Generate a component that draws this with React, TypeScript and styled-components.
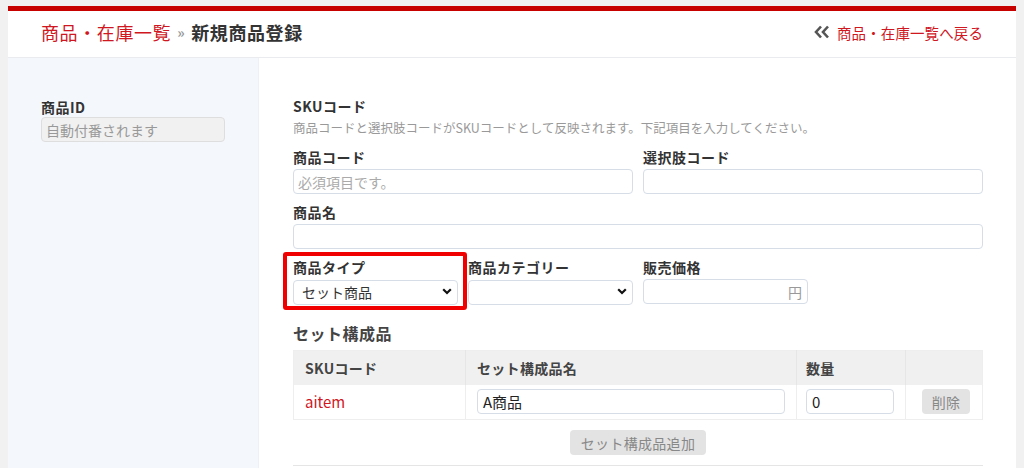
import React from "react";
import styled, { createGlobalStyle } from "styled-components";

const Global = createGlobalStyle`
  html, body { background: #f1f1f1; }
  body {
    margin: 6px 8px 0;
    font-family: "Noto Sans CJK JP", "Noto Sans", sans-serif;
    color: #333;
  }
  * { box-sizing: border-box; }
`;

const Card = styled.div`
  background: #fff;
  border-top: 5px solid #c70000;
`;

const Header = styled.header`
  height: 47px;
  display: flex;
  align-items: center;
  justify-content: space-between;
  padding: 0 33px 4px 33px;
  border-bottom: 1px solid #e9ebee;
`;

const Title = styled.h1`
  margin: 0;
  font-size: 18px;
  font-weight: 700;
  letter-spacing: 0.6px;
  display: flex;
  align-items: center;
  gap: 6px;
`;

const Crumb = styled.a`
  color: #d0161e;
  font-weight: 400;
  text-decoration: none;
`;

const Sep = styled.span`
  color: #999;
  font-size: 14px;
  font-weight: 700;
`;

const Current = styled.span`
  color: #333;
`;

const BackLink = styled.a`
  display: flex;
  align-items: center;
  gap: 7px;
  color: #d0161e;
  font-size: 14.5px;
  letter-spacing: 0.1px;
  text-decoration: none;
`;

const Body = styled.div`
  display: grid;
  grid-template-columns: 251px 1fr;
  min-height: 520px;
`;

const Sidebar = styled.aside`
  background: #f4f8fc;
  border-right: 1px solid #eef1f4;
  padding: 40px 33px;
`;

const Main = styled.main`
  padding: 38px 33px 40px 34px;
  min-width: 0;
`;

const Label = styled.div<{ $tight?: boolean }>`
  font-size: 14px;
  font-weight: 700;
  line-height: ${(p) => (p.$tight ? "19px" : "20px")};
  letter-spacing: 0.5px;
  color: #333;
  margin-bottom: ${(p) => (p.$tight ? "0" : "2px")};
  white-space: nowrap;
`;

const Help = styled.div`
  font-size: 12.5px;
  line-height: 16px;
  color: #999;
  margin: 4px 0 11px;
  white-space: nowrap;
`;

const TextInput = styled.input<{ $disabled?: boolean }>`
  display: block;
  width: 100%;
  height: 25px;
  border: 1px solid ${(p) => (p.$disabled ? "#dedede" : "#d6dde6")};
  border-radius: 4px;
  background: ${(p) => (p.$disabled ? "#f1f1f1" : "#fff")};
  font-family: inherit;
  font-size: 14px;
  color: #333;
  padding: 0 4px;
  outline: none;
  &::placeholder { color: #aaa; }
`;

const IdInput = styled(TextInput)`
  width: 184px;
  &::placeholder { color: #999; }
`;

const Grid = styled.div`
  display: grid;
  grid-template-columns: repeat(4, minmax(0, 1fr));
  column-gap: 10px;
  row-gap: 8px;
`;

const Field = styled.div<{ $span?: number; $highlight?: boolean }>`
  grid-column: span ${(p) => p.$span ?? 1};
  position: relative;
  min-width: 0;
  ${(p) =>
    p.$highlight &&
    `
    &::after {
      content: "";
      position: absolute;
      left: -10px;
      right: -9px;
      top: -5px;
      bottom: -6px;
      border: 4px solid #f00000;
      border-radius: 3px;
      pointer-events: none;
    }
  `}
`;

const SelectWrap = styled.div`
  position: relative;
  height: 25px;
`;

const Select = styled.select`
  appearance: none;
  width: 100%;
  height: 25px;
  border: 1px solid #d6dde6;
  border-radius: 4px;
  background: #fff;
  font-family: inherit;
  font-size: 14px;
  color: #333;
  padding: 0 8px;
  outline: none;
`;

const Chevron = styled.svg`
  position: absolute;
  right: 6px;
  top: 9px;
  pointer-events: none;
`;

const PriceBox = styled.div`
  display: flex;
  align-items: center;
  height: 25px;
  border: 1px solid #d6dde6;
  border-radius: 4px;
  padding: 0 5px 0 4px;
`;

const BareInput = styled.input`
  flex: 1;
  width: 0;
  min-width: 0;
  border: none;
  outline: none;
  font-family: inherit;
  font-size: 14px;
  background: transparent;
`;

const Yen = styled.span`
  font-size: 14px;
  color: #999;
`;

const SectionTitle = styled.h2`
  margin: 18px 0 6px;
  font-size: 16px;
  font-weight: 700;
  line-height: 22px;
  letter-spacing: 0.5px;
  color: #444;
`;

const Table = styled.table`
  width: 100%;
  border-collapse: collapse;
  border: 1px solid #eeeeee;
`;

const Th = styled.th<{ $w?: number; $pad?: number }>`
  background: #f0f0f0;
  height: 34px;
  text-align: left;
  padding: 0 0 0 ${(p) => p.$pad ?? 11}px;
  font-size: 14px;
  font-weight: 700;
  letter-spacing: 0.3px;
  color: #444;
  border-left: 1px solid #e6e6e6;
  width: ${(p) => (p.$w ? `${p.$w}px` : "auto")};
  &:first-child { border-left: none; }
`;

const Td = styled.td<{ $center?: boolean; $pad?: number; $padRight?: number }>`
  height: 35px;
  padding: 0 ${(p) => p.$padRight ?? 11}px 0 ${(p) => p.$pad ?? 11}px;
  font-size: 14px;
  border-left: 1px solid #eeeeee;
  text-align: ${(p) => (p.$center ? "center" : "left")};
  &:first-child { border-left: none; }
`;

const SkuLink = styled.a`
  color: #d0161e;
  font-size: 15px;
  text-decoration: none;
`;

const CellInput = styled(TextInput)`
  font-size: 15px;
  padding: 0 5px;
  color: #222;
`;

const GrayButton = styled.button<{ $small?: boolean }>`
  height: 25px;
  border: none;
  border-radius: 4px;
  background: #e3e3e3;
  color: #888;
  font-family: inherit;
  font-size: 14px;
  padding: 0 ${(p) => (p.$small ? "10px" : "11px")};
  letter-spacing: 0.3px;
`;

const AddRow = styled.div`
  display: flex;
  justify-content: center;
  padding: 10px 0 10px;
  border-bottom: 1px solid #e5e5e5;
`;

const ChevronDown = () => (
  <Chevron width="10" height="7" viewBox="0 0 10 7">
    <polyline points="1.2,1.2 5,5 8.8,1.2" fill="none" stroke="#111" strokeWidth="2.2" />
  </Chevron>
);

const DoubleLeft = () => (
  <svg width="16" height="14" viewBox="0 0 16 14">
    <polyline points="7,1.5 2,7 7,12.5" fill="none" stroke="#555" strokeWidth="2.6" />
    <polyline points="14,1.5 9,7 14,12.5" fill="none" stroke="#555" strokeWidth="2.6" />
  </svg>
);

export default function App() {
  return (
    <>
      <Global />
      <Card>
        <Header>
          <Title>
            <Crumb href="#">商品・在庫一覧</Crumb>
            <Sep>»</Sep>
            <Current>新規商品登録</Current>
          </Title>
          <BackLink href="#">
            <DoubleLeft />
            商品・在庫一覧へ戻る
          </BackLink>
        </Header>
        <Body>
          <Sidebar>
            <Label $tight>商品ID</Label>
            <IdInput $disabled placeholder="自動付番されます" disabled />
          </Sidebar>
          <Main>
            <Label>SKUコード</Label>
            <Help>商品コードと選択肢コードがSKUコードとして反映されます。下記項目を入力してください。</Help>
            <Grid>
              <Field $span={2}>
                <Label>商品コード</Label>
                <TextInput placeholder="必須項目です。" />
              </Field>
              <Field $span={2}>
                <Label>選択肢コード</Label>
                <TextInput />
              </Field>
              <Field $span={4}>
                <Label>商品名</Label>
                <TextInput />
              </Field>
              <Field $highlight>
                <Label>商品タイプ</Label>
                <SelectWrap>
                  <Select defaultValue="set">
                    <option value="set">セット商品</option>
                  </Select>
                  <ChevronDown />
                </SelectWrap>
              </Field>
              <Field>
                <Label>商品カテゴリー</Label>
                <SelectWrap>
                  <Select defaultValue="">
                    <option value=""></option>
                  </Select>
                  <ChevronDown />
                </SelectWrap>
              </Field>
              <Field>
                <Label>販売価格</Label>
                <PriceBox>
                  <BareInput />
                  <Yen>円</Yen>
                </PriceBox>
              </Field>
            </Grid>
            <SectionTitle>セット構成品</SectionTitle>
            <Table>
              <thead>
                <tr>
                  <Th $w={172}>SKUコード</Th>
                  <Th $w={331}>セット構成品名</Th>
                  <Th $w={109} $pad={9}>数量</Th>
                  <Th />
                </tr>
              </thead>
              <tbody>
                <tr>
                  <Td>
                    <SkuLink href="#">aitem</SkuLink>
                  </Td>
                  <Td>
                    <CellInput defaultValue="A商品" />
                  </Td>
                  <Td $pad={9}>
                    <CellInput defaultValue="0" />
                  </Td>
                  <Td $center $pad={4} $padRight={0}>
                    <GrayButton $small>削除</GrayButton>
                  </Td>
                </tr>
              </tbody>
            </Table>
            <AddRow>
              <GrayButton>セット構成品追加</GrayButton>
            </AddRow>
          </Main>
        </Body>
      </Card>
    </>
  );
}
